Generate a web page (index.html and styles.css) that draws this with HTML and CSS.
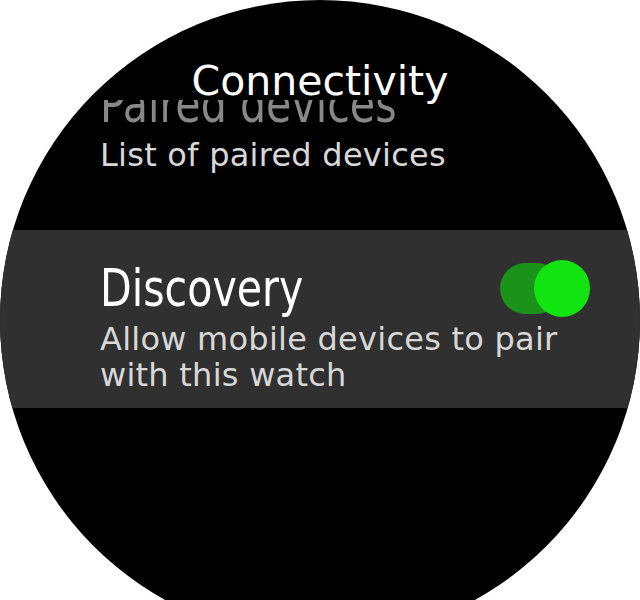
FILE: index.html
```html
<!DOCTYPE html>
<html lang="en">
<head>
<meta charset="utf-8">
<title>Connectivity</title>
<link rel="stylesheet" href="styles.css">
</head>
<body>
<div class="watch">
  <header class="header">
    <h1 class="header-title">Connectivity</h1>
  </header>
  <div class="viewport">
    <ul class="list">
      <li class="item">
        <div class="item-row">
          <span class="item-title item-title--faded">Paired devices</span>
        </div>
        <p class="item-desc">List of paired devices</p>
      </li>
      <li class="item item--selected">
        <div class="item-row">
          <span class="item-title">Discovery</span>
          <span class="toggle toggle--on" role="switch" aria-checked="true">
            <span class="toggle-knob"></span>
          </span>
        </div>
        <p class="item-desc">Allow mobile devices to pair<br>with this watch</p>
      </li>
    </ul>
  </div>
</div>
</body>
</html>
```

FILE: styles.css
```css
html, body {
  margin: 0;
  padding: 0;
  background: #ffffff;
  width: 640px;
  height: 600px;
  overflow: hidden;
}

.watch {
  width: 640px;
  height: 640px;
  border-radius: 50%;
  background: #000000;
  overflow: hidden;
  display: flex;
  flex-direction: column;
  font-family: "DejaVu Sans", "Liberation Sans", sans-serif;
}

.header {
  position: relative;
  z-index: 2;
  height: 100px;
  box-sizing: border-box;
  padding-top: 61px;
  flex: none;
}

.header-title {
  margin: 0;
  font-size: 41px;
  line-height: 40px;
  font-weight: normal;
  color: #ffffff;
  text-align: center;
}

.viewport {
  flex: 1;
  overflow: hidden;
}

.list {
  list-style: none;
  margin: -54px 0 0 0;
  padding: 0;
  display: flex;
  flex-direction: column;
  gap: 42px;
}

.item {
  padding: 33px 50px 15px 100px;
}

.item--selected {
  background: #303030;
}

.item-row {
  display: flex;
  align-items: center;
  justify-content: space-between;
  height: 50px;
}

.item-title {
  display: inline-block;
  font-family: "DejaVu Sans Condensed", "DejaVu Sans", sans-serif;
  font-stretch: condensed;
  font-weight: 300;
  font-size: 52px;
  line-height: 50px;
  color: #ffffff;
  transform: scaleX(0.88);
  transform-origin: left center;
}

.item-title--faded {
  color: #888888;
}

.item-desc {
  margin: 8px 0 0 0;
  font-size: 32px;
  line-height: 36px;
  letter-spacing: 0.25px;
  color: #d8d8d8;
}

.toggle {
  position: relative;
  width: 90px;
  height: 51px;
  flex: none;
}

.toggle--on::before {
  content: "";
  position: absolute;
  left: 0;
  top: 0;
  width: 62px;
  height: 51px;
  border-radius: 26px;
  background: #1b931b;
}

.toggle-knob {
  position: absolute;
  right: 0;
  top: -3px;
  width: 56px;
  height: 57px;
  border-radius: 50%;
  background: #12e412;
}
```
